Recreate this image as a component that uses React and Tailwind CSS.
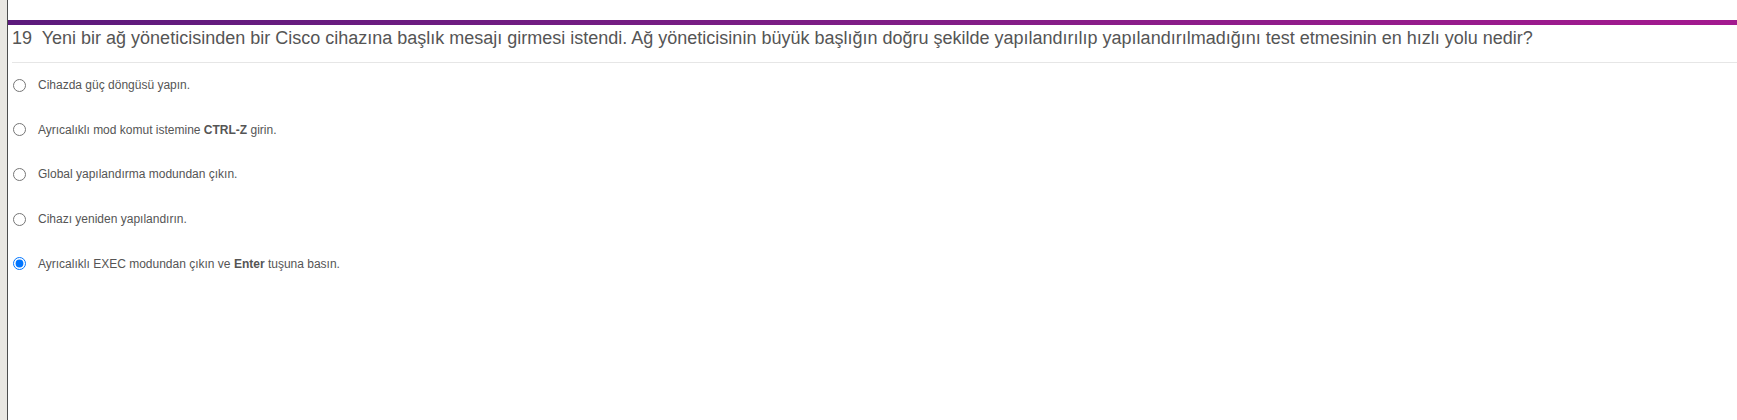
const OPTIONS = [
  { id: 1, text: <>Cihazda güç döngüsü yapın.</> },
  { id: 2, text: <>Ayrıcalıklı mod komut istemine <b>CTRL-Z</b> girin.</> },
  { id: 3, text: <>Global yapılandırma modundan çıkın.</> },
  { id: 4, text: <>Cihazı yeniden yapılandırın.</> },
  { id: 5, text: <>Ayrıcalıklı EXEC modundan çıkın ve <b>Enter</b> tuşuna basın.</>, checked: true },
]

export default function App() {
  return (
    <div className="flex h-[420px] bg-white" style={{ fontFamily: '"Liberation Sans", Arial, sans-serif' }}>
      <div className="w-[8px] flex-shrink-0 bg-[#e9e7e2] border-r border-[#4d4d4d]" />
      <div className="flex-1 pt-[20px]">
        <div className="h-[5px] bg-gradient-to-r from-[#5c1a7c] to-[#a3198f]" />
        <div className="pl-[4px]">
          <h2 className="text-[18px] leading-[24px] text-[#555] pt-[1px] pb-[12px] border-b border-[#e6e6e6]">
            19&nbsp; Yeni bir ağ yöneticisinden bir Cisco cihazına başlık mesajı girmesi istendi. Ağ yöneticisinin büyük başlığın doğru şekilde yapılandırılıp yapılandırılmadığını test etmesinin en hızlı yolu nedir?
          </h2>
          <div className="pt-[3px]">
            {OPTIONS.map(o => (
              <label key={o.id} className="flex items-center h-[44.6px] text-[12px] text-[#555] pb-[6px]">
                <input type="radio" name="q19" defaultChecked={o.checked} className="w-[13px] h-[13px] m-0 ml-[1px] mr-[12px]" />
                <span>{o.text}</span>
              </label>
            ))}
          </div>
        </div>
      </div>
    </div>
  )
}
